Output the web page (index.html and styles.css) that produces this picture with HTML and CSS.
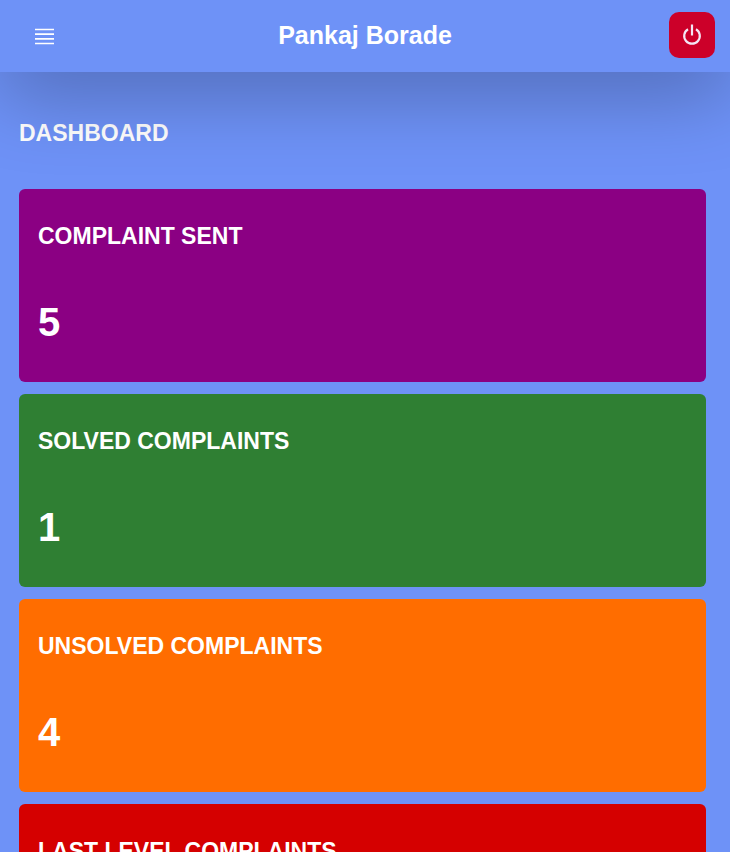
FILE: index.html
```html
<!DOCTYPE html>
<html lang="en">
<head>
<meta charset="utf-8">
<meta name="viewport" content="width=device-width, initial-scale=1">
<title>Dashboard</title>
<link rel="stylesheet" href="styles.css">
</head>
<body>
<header class="topbar">
  <button class="menu" type="button" aria-label="Menu">
    <svg width="20" height="20" viewBox="0 0 20 20" fill="none" stroke="currentColor" stroke-width="1.7" aria-hidden="true"><path d="M0 4.5H19M0 9.2H19M0 13.9H19M0 18.5H19"/></svg>
  </button>
  <h1 class="user">Pankaj Borade</h1>
  <button class="power" type="button" aria-label="Log out">
    <svg width="24" height="24" viewBox="0 0 24 24" fill="none" stroke="currentColor" stroke-width="2.2" aria-hidden="true"><path d="M12 1.5V12.5M8 6.2A7.8 7.8 0 1 0 16 6.2"/></svg>
  </button>
</header>
<main class="content">
  <h2 class="title">DASHBOARD</h2>
  <div class="cards">
    <section class="card sent"><h3 class="label">COMPLAINT SENT</h3><p class="count">5</p></section>
    <section class="card solved"><h3 class="label">SOLVED COMPLAINTS</h3><p class="count">1</p></section>
    <section class="card unsolved"><h3 class="label">UNSOLVED COMPLAINTS</h3><p class="count">4</p></section>
    <section class="card last"><h3 class="label">LAST LEVEL COMPLAINTS</h3><p class="count">0</p></section>
  </div>
</main>
</body>
</html>
```
FILE: styles.css
```css
* { box-sizing: border-box; }
html { height: 100%; }
body {
  height: 100%;
  margin: 0;
  overflow: hidden;
  background: #6e92f7;
  color: #fff;
  font-family: "Liberation Sans", Arial, sans-serif;
}
h1, h2, h3, p { margin: 0; font-weight: 700; }
.topbar {
  position: relative;
  display: grid;
  grid-template-columns: 1fr auto 1fr;
  align-items: center;
  height: 72px;
  padding: 0 15px 2px;
  background: #6e92f7;
  box-shadow: 0 20px 80px rgba(0, 0, 0, 0.29);
}
button { border: 0; padding: 0; color: inherit; display: grid; place-items: center; }
.menu { width: 60px; height: 46px; background: transparent; }
.user { font-size: 25px; line-height: 32px; }
.power {
  justify-self: end;
  width: 46px;
  height: 46px;
  border-radius: 10px;
  background: #cc0029;
  color: #f3e6f5;
}
.content { padding: 47px 24px 0 19px; }
.title { font-size: 23px; line-height: 28px; }
.cards { display: grid; gap: 12px; margin-top: 42px; }
.card { height: 193px; padding: 33px 19px; border-radius: 6px; }
.label { font-size: 23px; line-height: 28px; }
.count { margin-top: 48px; font-size: 40px; line-height: 48px; }
.sent { background: #8b0083; }
.solved { background: #2f7f33; }
.unsolved { background: #ff6d00; }
.last { background: #d50000; }
```
